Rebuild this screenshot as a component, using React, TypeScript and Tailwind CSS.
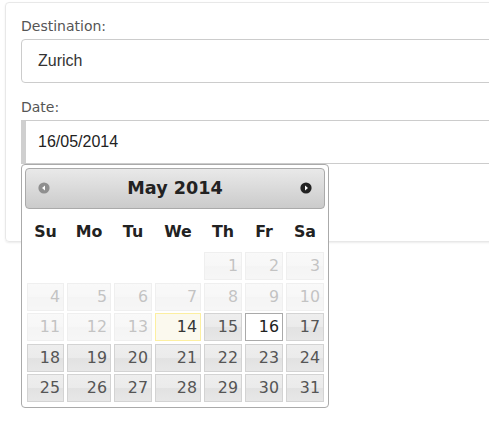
import React from "react";

const cols = "grid grid-cols-[37px_44px_38px_46px_38px_38px_38px] gap-x-[3px]";

type Cell = { d?: number; kind?: "disabled" | "default" | "today" | "active" };

function buildCells(): Cell[] {
  const cells: Cell[] = [];
  for (let i = 0; i < 4; i++) cells.push({});
  for (let d = 1; d <= 31; d++) {
    let kind: Cell["kind"] = "default";
    if (d < 14) kind = "disabled";
    if (d === 14) kind = "today";
    if (d === 16) kind = "active";
    cells.push({ d, kind });
  }
  return cells;
}

function DayCell({ c }: { c: Cell }) {
  if (!c.d) return <div />;
  const base =
    "h-[28px] border flex items-center justify-end pr-[3px] text-[15.84px] leading-none";
  if (c.kind === "today")
    return <div className={`${base} bg-[#fbf9ee] border-[#fcefa1] text-[#363636]`}>{c.d}</div>;
  if (c.kind === "active")
    return <div className={`${base} bg-white border-[#aaaaaa] text-[#212121]`}>{c.d}</div>;
  const glass =
    "bg-[linear-gradient(to_bottom,#eeeeee_0%,#ebebeb_48%,#e2e2e2_52%,#e7e7e7_100%)] border-[#d3d3d3] text-[#555555]";
  return (
    <div className={`${base} ${glass} ${c.kind === "disabled" ? "opacity-35" : ""}`}>{c.d}</div>
  );
}

function CircleIcon({ dir, color }: { dir: "w" | "e"; color: string }) {
  return (
    <svg width="12" height="12" viewBox="0 0 12 12">
      <circle cx="6" cy="6" r="5.6" fill={color} />
      {dir === "w" ? (
        <path d="M4 6 L7 3.5 L7 8.5 Z" fill="#fff" />
      ) : (
        <path d="M8 6 L5 3.5 L5 8.5 Z" fill="#fff" />
      )}
    </svg>
  );
}

export default function App() {
  const cells = buildCells();
  const heads = ["Su", "Mo", "Tu", "We", "Th", "Fr", "Sa"];
  return (
    <div className="relative w-[489px] h-[431px] overflow-hidden bg-white">
      <div className="ml-[5px] mt-[2px] w-[600px] h-[240px] border border-[#e8e8e8] rounded-[4px] shadow-[0_1px_2px_rgba(0,0,0,0.08)] pt-[13px] pl-[15px]">
        <div className="text-[14px] leading-[20px] text-[#555555] font-['DejaVu_Sans',sans-serif] mb-[3px]">
          Destination:
        </div>
        <div className="h-[44px] border border-[#cccccc] rounded-[4px] flex items-center pl-[16px] text-[16px] text-[#333333] font-['Liberation_Sans',Arial,sans-serif]">
          Zurich
        </div>
        <div className="mt-[14px] text-[14px] leading-[20px] text-[#555555] font-['DejaVu_Sans',sans-serif] mb-[3px]">
          Date:
        </div>
        <div className="h-[44px] border border-[#cccccc] border-l-[5px] border-l-[#cfcfcf] flex items-center pl-[12px] text-[16px] text-[#222222] font-['Liberation_Sans',Arial,sans-serif]">
          16/05/2014
        </div>
      </div>

      <div className="absolute left-[21px] top-[164px] w-[308px] h-[244px] border border-[#aaaaaa] rounded-[4px] bg-white p-[3px] font-['DejaVu_Sans',Verdana,sans-serif] text-[#222222]">
        <div className="relative h-[41px] border border-[#aaaaaa] rounded-[4px] bg-[linear-gradient(to_bottom,#e9e9e9,#cbcbcb)] flex items-center justify-center">
          <span className="text-[17.6px] font-bold text-[#222222] leading-none">May 2014</span>
          <div className="absolute left-[12px] top-[13px]">
            <CircleIcon dir="w" color="#8f8f8f" />
          </div>
          <div className="absolute right-[12px] top-[13px]">
            <CircleIcon dir="e" color="#222222" />
          </div>
        </div>
        <div className={`${cols} ml-[2px] h-[43px] items-center`}>
          {heads.map((h) => (
            <div key={h} className="text-center font-bold text-[15.84px] text-[#222222] pt-[2px]">
              {h}
            </div>
          ))}
        </div>
        <div className={`${cols} ml-[2px] gap-y-[2.5px]`}>
          {cells.map((c, i) => (
            <DayCell key={i} c={c} />
          ))}
        </div>
      </div>
    </div>
  );
}
